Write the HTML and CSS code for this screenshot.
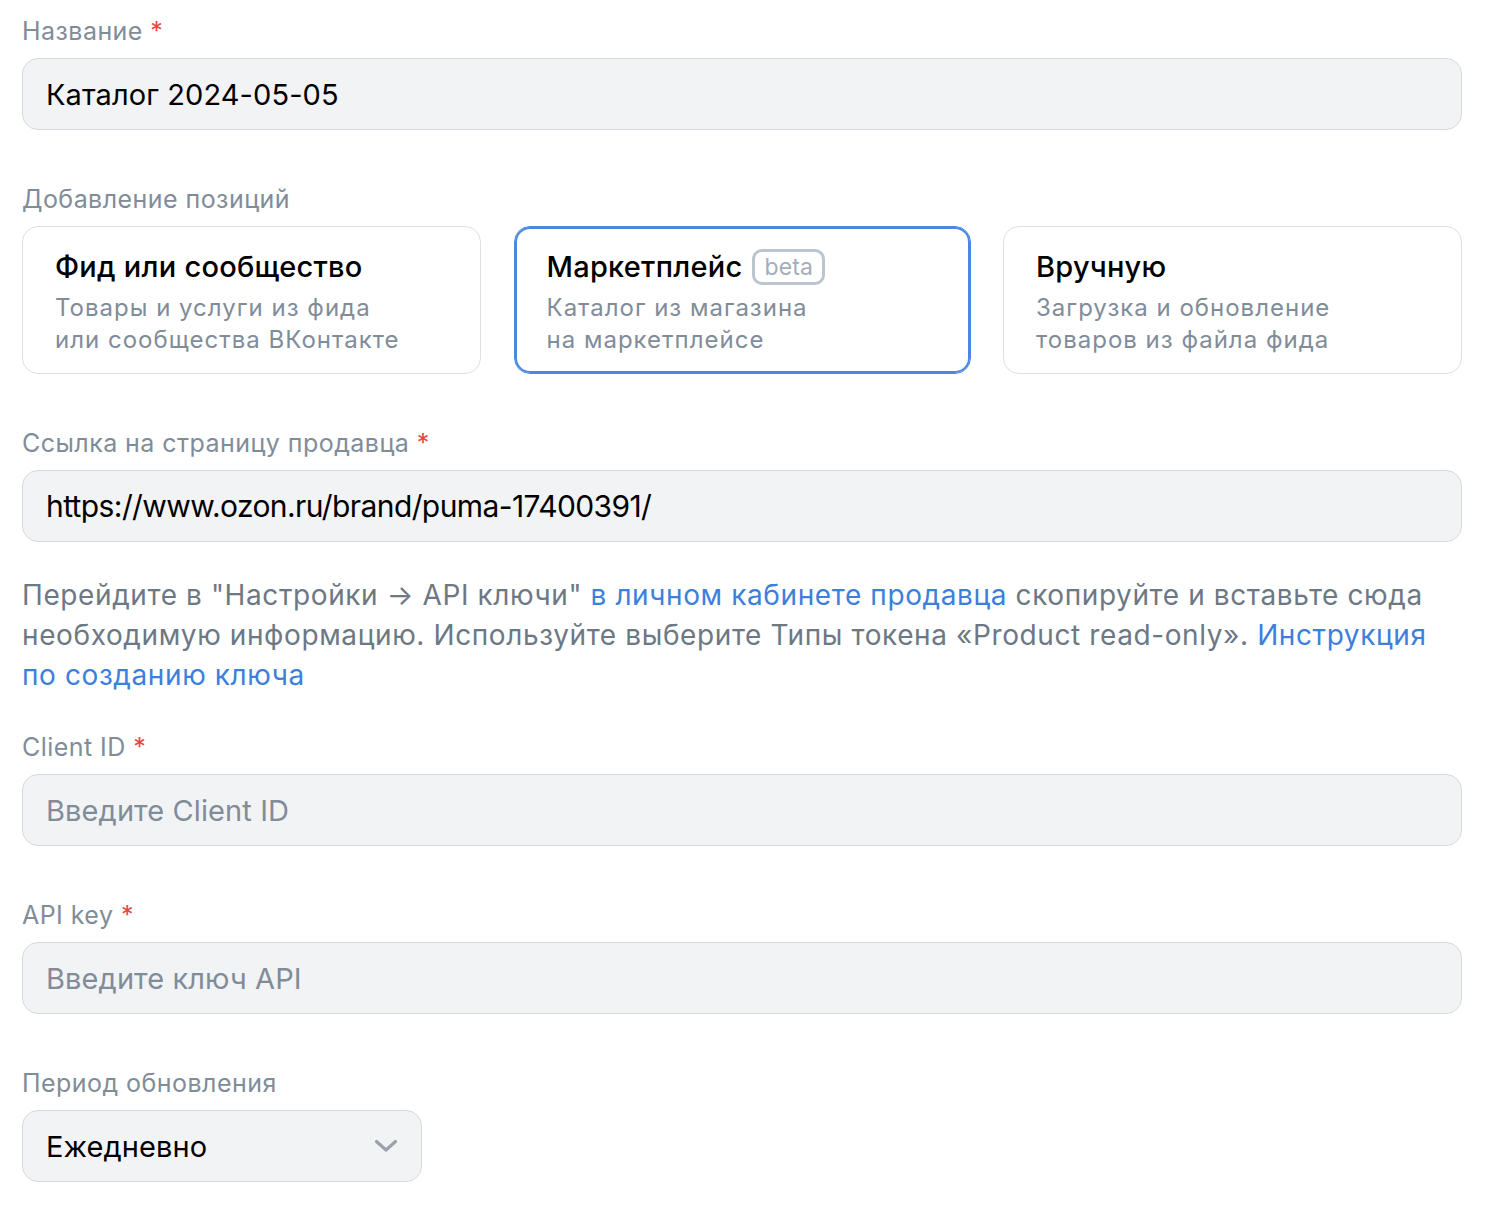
FILE: index.html
```html
<!DOCTYPE html>
<html lang="ru">
<head>
<meta charset="utf-8">
<title>Каталог</title>
<link rel="stylesheet" href="styles.css">
</head>
<body>
<form class="form">
  <div class="group first">
    <div class="label">Название <span class="req">*</span></div>
    <div class="field"><span class="value">Каталог 2024-05-05</span></div>
  </div>

  <div class="group">
    <div class="label">Добавление позиций</div>
    <div class="cards">
      <div class="card">
        <div class="card-title">Фид или сообщество</div>
        <div class="card-sub">Товары и услуги из фида<br>или сообщества ВКонтакте</div>
      </div>
      <div class="card selected">
        <div class="card-title">Маркетплейс <span class="badge">beta</span></div>
        <div class="card-sub">Каталог из магазина<br>на маркетплейсе</div>
      </div>
      <div class="card">
        <div class="card-title">Вручную</div>
        <div class="card-sub">Загрузка и обновление<br>товаров из файла фида</div>
      </div>
    </div>
  </div>

  <div class="group">
    <div class="label">Ссылка на страницу продавца <span class="req">*</span></div>
    <div class="field"><span class="value url">https://www.ozon.ru/brand/puma-17400391/</span></div>
    <p class="help">Перейдите в "Настройки → API ключи" <a class="link" href="#">в личном кабинете продавца</a> скопируйте и вставьте сюда необходимую информацию. Используйте выберите Типы токена «Product read-only». <a class="link" href="#">Инструкция по созданию ключа</a></p>
  </div>

  <div class="group after-help">
    <div class="label">Client ID <span class="req">*</span></div>
    <div class="field"><span class="placeholder">Введите Client ID</span></div>
  </div>

  <div class="group">
    <div class="label">API key <span class="req">*</span></div>
    <div class="field"><span class="placeholder">Введите ключ API</span></div>
  </div>

  <div class="group">
    <div class="label">Период обновления</div>
    <div class="field select">
      <span class="value">Ежедневно</span>
      <svg class="chevron" width="24" height="14" viewBox="0 0 24 14" aria-hidden="true">
        <path d="M2.5 2.5 L12 11 L21.5 2.5" fill="none" stroke="#99a2ad" stroke-width="3.2" stroke-linecap="round" stroke-linejoin="round"/>
      </svg>
    </div>
  </div>
</form>
</body>
</html>
```

FILE: styles.css
```css
* {
  box-sizing: border-box;
}

html, body {
  margin: 0;
  padding: 0;
  background: #ffffff;
}

body {
  font-family: Inter, "Noto Sans", "Liberation Sans", sans-serif;
  color: #000000;
  -webkit-font-smoothing: antialiased;
}

.form {
  width: 1440px;
  margin-left: 22px;
  padding-top: 15px;
}

.group {
  margin-top: 53px;
}

.group.first {
  margin-top: 0;
}

.group.after-help {
  margin-top: 36px;
}

.label {
  font-size: 25px;
  line-height: 32px;
  color: #818c99;
  margin-bottom: 11px;
  letter-spacing: 0.45px;
}

.req {
  color: #e64646;
}

.field {
  height: 72px;
  border: 1px solid #d7dadf;
  border-radius: 16px;
  background: #f2f3f5;
  display: flex;
  align-items: center;
  padding: 0 23px;
  font-size: 29px;
  letter-spacing: 0.1px;
}

.value {
  color: #000000;
}

.url {
  font-size: 30px;
  letter-spacing: -0.6px;
}

.placeholder {
  color: #818c99;
}

.select {
  width: 400px;
  justify-content: space-between;
}

.chevron {
  display: block;
}

.cards {
  display: grid;
  grid-template-columns: 459px 457px 459px;
  column-gap: 32px;
  justify-content: space-between;
}

.card {
  height: 148px;
  border: 1px solid #dce0e5;
  border-radius: 16px;
  padding: 22px 20px 0 32px;
  background: #ffffff;
}

.card.selected {
  border-color: #4a88e2;
  box-shadow: inset 0 0 0 2px #4a88e2;
}

.card-title {
  font-size: 29px;
  line-height: 36px;
  font-weight: 500;
  letter-spacing: 0.25px;
  display: flex;
  align-items: center;
  gap: 10px;
  margin-bottom: 7px;
}

.badge {
  display: inline-flex;
  align-items: center;
  height: 36px;
  padding: 0 9px;
  border: 3px solid #bcc4ce;
  border-radius: 10px;
  font-size: 23px;
  font-weight: 400;
  letter-spacing: 0.2px;
  color: #a3adb8;
}

.card-sub {
  font-size: 24px;
  line-height: 32px;
  color: #818c99;
  letter-spacing: 1px;
}

.help {
  margin: 33px 0 0 0;
  font-size: 28px;
  line-height: 40px;
  color: #6d7885;
  letter-spacing: 0.6px;
}

.link {
  color: #3d7fdb;
  text-decoration: none;
}
```
